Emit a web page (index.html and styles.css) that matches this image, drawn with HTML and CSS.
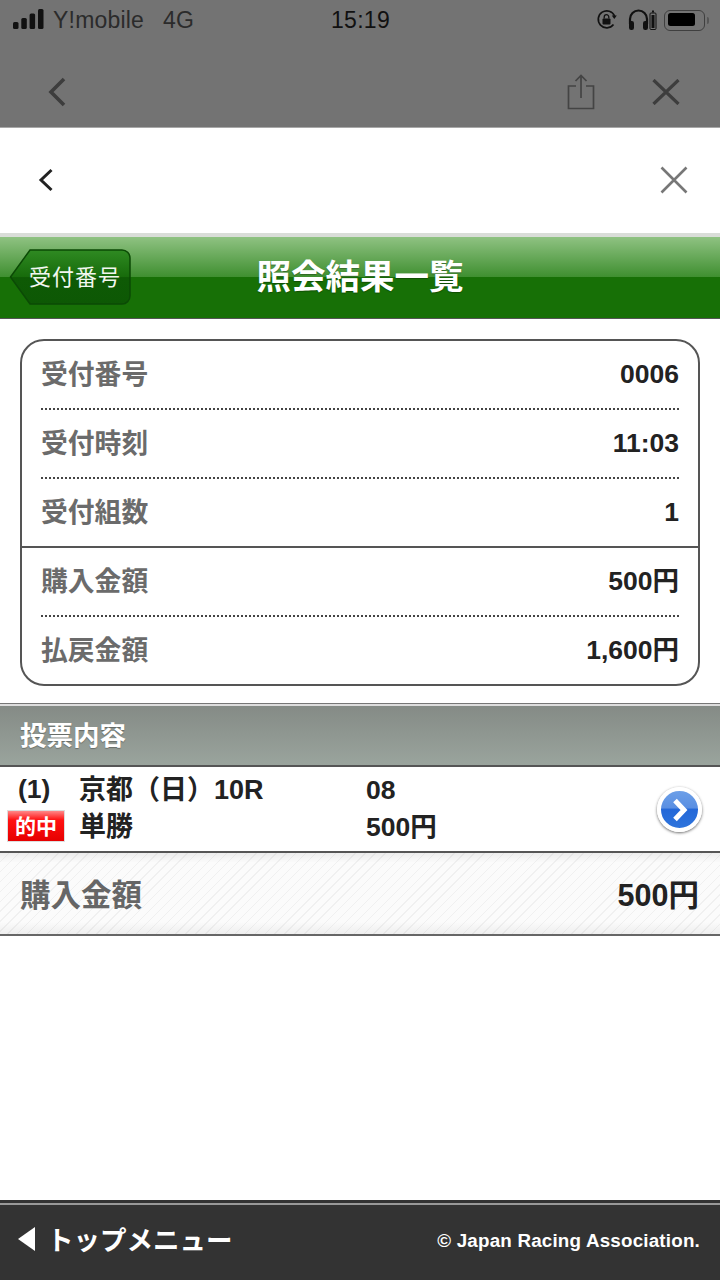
FILE: index.html
```html
<!DOCTYPE html>
<html lang="ja">
<head>
  <meta charset="UTF-8">
  <meta name="viewport" content="width=device-width, initial-scale=1.0">
  <link rel="stylesheet" href="styles.css">
</head>
<body>

<div class="page">

  <!-- dimmed browser chrome -->
  <header class="chrome">
    <div class="status">
      <div class="status-left">
        <svg class="signal" width="31" height="20" viewBox="0 0 31 20">
          <rect x="0" y="13" width="5.500" height="7" rx="1.500"/>
          <rect x="8.300" y="9" width="5.500" height="11" rx="1.500"/>
          <rect x="16.600" y="4.500" width="5.500" height="15.500" rx="1.500"/>
          <rect x="25" y="0" width="5.500" height="20" rx="1.500"/>
        </svg>
        <span class="carrier">Y!mobile</span>
        <span class="network">4G</span>
      </div>
      <div class="clock">15:19</div>
      <div class="status-right">
        <svg width="22" height="22" viewBox="0 0 22 22" fill="none" stroke="#111">
          <path d="M17.500 15.500A8.500 8.500 0 1 1 18.600 7" stroke-width="1.700"/>
          <path d="M15.800 6.500h5l-2.500 3.500z" fill="#111" stroke="none"/>
          <rect x="6.500" y="9.500" width="8" height="6" rx="1" fill="#111" stroke="none"/>
          <path d="M8.200 9.500V8a2.300 2.300 0 0 1 4.600 0v1.500" stroke-width="1.300"/>
        </svg>
        <svg class="phones" width="29" height="22" viewBox="0 0 29 22" fill="none">
          <path d="M2 15V10a8.500 8.500 0 0 1 17 0v5" stroke="#111" stroke-width="2.200"/>
          <rect x="1" y="12" width="5" height="9" rx="2.200" fill="#111"/>
          <rect x="15" y="12" width="5" height="9" rx="2.200" fill="#111"/>
          <rect x="22" y="4" width="6" height="16.500" rx="1" stroke="#111" stroke-width="1"/>
          <rect x="23.500" y="6" width="3" height="13" fill="#111"/>
          <rect x="24" y="1.500" width="2" height="2" fill="#111"/>
        </svg>
        <div class="battery"><div class="battery-fill"></div></div>
        <div class="battery-tip"></div>
      </div>
    </div>
    <div class="chrome-nav">
      <svg width="18" height="30" viewBox="0 0 18 30" fill="none" stroke="#3d3d3d" stroke-width="3.600">
        <path d="M16 2L3 15l13 13"/>
      </svg>
      <div class="chrome-actions">
        <svg width="28" height="36" viewBox="0 0 28 36" fill="none" stroke="#444" stroke-width="1.700">
          <path d="M9 12H1.500v22.500h25V12H19"/>
          <path d="M14 24V2M8.500 7L14 1.500 19.500 7"/>
        </svg>
        <svg width="28" height="26" viewBox="0 0 28 26" fill="none" stroke="#3d3d3d" stroke-width="3.200">
          <path d="M1.500 1l25 24M26.500 1l-25 24"/>
        </svg>
      </div>
    </div>
  </header>

  <!-- white in-app bar -->
  <div class="inner-nav">
    <svg width="16" height="24" viewBox="0 0 16 24" fill="none" stroke="#222" stroke-width="3">
      <path d="M13.500 2L3 12l10.500 10"/>
    </svg>
    <svg width="28" height="28" viewBox="0 0 28 28" fill="none" stroke="#777" stroke-width="2.600">
      <path d="M1.500 1.500l25 25M26.500 1.500l-25 25"/>
    </svg>
  </div>

  <div class="title-bar">
    <div class="back-btn">
      <svg class="back-shape" width="122" height="58" viewBox="0 0 122 58">
        <defs>
          <linearGradient id="backFill" x1="0" y1="0" x2="0" y2="1">
            <stop offset="0" stop-color="#2f8a22"/>
            <stop offset="0.5" stop-color="#176b0b"/>
            <stop offset="0.51" stop-color="#0e5a05"/>
            <stop offset="1" stop-color="#0d5804"/>
          </linearGradient>
        </defs>
        <path d="M1.500 29L21 2h92a8 8 0 0 1 8 8v38a8 8 0 0 1-8 8H21z" fill="url(#backFill)" stroke="#0b4a05" stroke-width="1.500"/>
      </svg>
      <span class="back-label">受付番号</span>
    </div>
    <h1 class="title">照会結果一覧</h1>
  </div>

  <section class="summary">
    <div class="summary-row dotted"><span class="label">受付番号</span><span class="value">0006</span></div>
    <div class="summary-row dotted"><span class="label">受付時刻</span><span class="value">11:03</span></div>
    <div class="summary-row solid"><span class="label">受付組数</span><span class="value">1</span></div>
    <div class="summary-row dotted"><span class="label">購入金額</span><span class="value">500円</span></div>
    <div class="summary-row"><span class="label">払戻金額</span><span class="value">1,600円</span></div>
  </section>

  <h2 class="section-head">投票内容</h2>

  <div class="bet">
    <div class="bet-col-no">
      <span class="bet-no">(1)</span>
      <span class="hit">的中</span>
    </div>
    <div class="bet-col-race">
      <span>京都（日）10R</span>
      <span>単勝</span>
    </div>
    <div class="bet-col-amount">
      <span>08</span>
      <span>500円</span>
    </div>
    <div class="go">
      <svg width="18" height="24" viewBox="0 0 18 24" fill="none" stroke="#fff" stroke-width="5">
        <path d="M4 2.500l9 9.500-9 9.500"/>
      </svg>
    </div>
  </div>

  <div class="total">
    <span class="total-label">購入金額</span>
    <span class="total-value">500円</span>
  </div>

  <div class="spacer"></div>

  <footer class="footer">
    <div class="top-link"><span class="arrow"></span>トップメニュー</div>
    <div class="copy">© Japan Racing Association.</div>
  </footer>

</div>

</body>
</html>
```

FILE: styles.css
```css
* {
  box-sizing: border-box;
}

html, body {
  margin: 0;
  height: 100%;
}

body {
  font-family: 'Liberation Sans', 'Noto Sans CJK JP', sans-serif;
  background: #fff;
  overflow: hidden;
}

.page {
  width: 720px;
  height: 1280px;
  display: flex;
  flex-direction: column;
}

/* chrome */
.chrome {
  height: 128px;
  background: #737373;
  border-bottom: 1px solid #a8a8a8;
  flex: none;
}

.status {
  height: 40px;
  padding: 0 11px 0 13px;
  display: grid;
  grid-template-columns: 1fr auto 1fr;
  align-items: center;
  color: #111;
}

.status-left {
  display: flex;
  align-items: center;
  font-size: 23px;
}

.signal {
  fill: #111;
  margin-right: 9px;
  margin-top: -2px;
}

.carrier {
  color: #2b2b2b;
  letter-spacing: 0.2px;
}

.network {
  margin-left: 19px;
  color: #2b2b2b;
}

.clock {
  font-size: 23px;
  color: #111;
  letter-spacing: 0.3px;
  margin-left: -1px;
}

.status-right {
  display: flex;
  align-items: center;
  justify-content: flex-end;
}

.phones {
  margin-left: 10px;
}

.battery {
  width: 41px;
  height: 21px;
  margin-left: 7px;
  border: 1.5px solid #3f3f3f;
  border-radius: 6px;
  padding: 2.5px;
}

.battery-fill {
  width: 27px;
  height: 13px;
  background: #000;
  border-radius: 2.5px;
}

.battery-tip {
  width: 2px;
  height: 7px;
  margin-left: 2px;
  background: #555;
  border-radius: 0 2px 2px 0;
}

.chrome-nav {
  height: 87px;
  padding: 16px 40px 0 48px;
  display: flex;
  align-items: center;
  justify-content: space-between;
}

.chrome-actions {
  display: flex;
  align-items: center;
  gap: 57px;
}

/* white bar */
.inner-nav {
  height: 105px;
  padding: 0 32px 2px 38px;
  display: flex;
  align-items: center;
  justify-content: space-between;
  flex: none;
}

.title-bar {
  height: 86px;
  flex: none;
  position: relative;
  display: flex;
  align-items: center;
  justify-content: center;
  border-top: 4px solid #d9ddd8;
  border-bottom: 1px solid #555;
  background: linear-gradient(#8fc282 0, #3f8f30 49.500%, #177006 50%, #177006 100%);
}

.back-btn {
  position: absolute;
  left: 9px;
  top: 11px;
  width: 122px;
  height: 58px;
  display: flex;
  align-items: center;
  justify-content: flex-end;
}

.back-shape {
  position: absolute;
  left: 0;
  top: 0;
}

.back-label {
  position: relative;
  font-family: 'Noto Sans CJK JP', sans-serif;
  font-size: 22px;
  color: #f2f7f0;
  margin-right: 10px;
  padding-bottom: 5px;
  letter-spacing: 1px;
}

.title {
  margin: 0;
  padding-bottom: 7px;
  font-family: 'Noto Sans CJK JP', sans-serif;
  font-size: 34.500px;
  font-weight: 700;
  color: #fff;
  text-shadow: 0 1px 1px rgba(0, 0, 0, 0.3);
}

/* summary card */
.summary {
  margin: 20px 20px 17px;
  height: 347px;
  flex: none;
  border: 2px solid #555;
  border-radius: 24px;
  display: flex;
  flex-direction: column;
}

.summary-row {
  flex: 1;
  display: flex;
  align-items: center;
  justify-content: space-between;
  margin: 0 19px;
  padding-bottom: 1px;
}

.summary-row.dotted {
  border-bottom: 2px dotted #444;
}

.summary-row.solid {
  margin: 0;
  padding: 0 19px 1px;
  border-bottom: 2px solid #555;
}

.label {
  font-family: 'Noto Sans CJK JP', sans-serif;
  font-size: 26.800px;
  font-weight: 700;
  color: #6b6b6b;
  padding-bottom: 4px;
}

.value {
  font-size: 26.500px;
  line-height: 30px;
  font-weight: 700;
  color: #222;
}

/* vote list */
.section-head {
  margin: 0;
  height: 64px;
  flex: none;
  padding: 0 0 2px 20px;
  display: flex;
  align-items: center;
  font-family: 'Noto Sans CJK JP', sans-serif;
  font-size: 26.500px;
  font-weight: 700;
  color: #fff;
  border-top: 1px solid #777;
  border-bottom: 2px solid #555;
  box-shadow: inset 0 2px 0 #ddd;
  background: linear-gradient(#848a85, #9aa49d);
  text-shadow: 0 1px 1px rgba(0, 0, 0, 0.3);
}

.bet {
  height: 84px;
  flex: none;
  display: flex;
  align-items: center;
  font-size: 26.500px;
  font-weight: 700;
  color: #222;
  position: relative;
}

.bet span {
  display: block;
}

.bet-col-no {
  width: 79px;
  padding-left: 7px;
  display: flex;
  flex-direction: column;
  gap: 5px;
  margin-top: -4px;
}

.bet-no {
  padding-left: 11px;
  height: 32px;
  line-height: 32px;
}

.hit {
  width: 58px;
  height: 32px;
  line-height: 29px;
  text-align: center;
  font-family: 'Noto Sans CJK JP', sans-serif;
  font-size: 21px;
  color: #fff;
  background: linear-gradient(#f88 0, #f11 30%, #e60000 100%);
  border: 1px solid #ddd;
}

.bet-col-race {
  width: 287px;
  font-size: 27px;
}

.bet-col-race span, .bet-col-amount span {
  height: 37px;
  line-height: 37px;
  white-space: nowrap;
}

.bet-col-race, .bet-col-amount {
  margin-top: -1px;
}

.go {
  position: absolute;
  right: 18px;
  top: 20px;
  width: 45px;
  height: 45px;
  border-radius: 50%;
  border: 4px solid #fff;
  background: linear-gradient(#6c9fe8, #5a8fe2 45%, #2468d8 50%, #2e74dc 100%);
  box-shadow: 0 1px 3px rgba(0, 0, 0, 0.6);
  display: flex;
  align-items: center;
  justify-content: center;
}

.total {
  height: 85px;
  flex: none;
  padding: 0 21px 2px 20px;
  display: flex;
  align-items: center;
  justify-content: space-between;
  border-top: 2px solid #555;
  border-bottom: 2px solid #666;
  background:
    linear-gradient(rgba(0, 0, 0, 0.06), transparent 12%, transparent 85%, rgba(0, 0, 0, 0.05)),
    repeating-linear-gradient(135deg, #fbfbfb 0, #fbfbfb 6px, #f0f0f0 6px, #f0f0f0 7px);
}

.total-label {
  font-family: 'Noto Sans CJK JP', sans-serif;
  font-size: 30.500px;
  font-weight: 700;
  color: #666;
}

.total-value {
  font-size: 30.500px;
  font-weight: 700;
  color: #222;
}

.spacer {
  flex: 1;
}

.footer {
  height: 80px;
  flex: none;
  padding: 0 20px 2px 18px;
  display: flex;
  align-items: center;
  justify-content: space-between;
  background: #333;
  border-top: 3px solid #333;
  box-shadow: inset 0 2px 0 #999;
  color: #fff;
  font-weight: 700;
}

.top-link {
  display: flex;
  align-items: center;
  font-family: 'Noto Sans CJK JP', sans-serif;
  font-size: 26.500px;
  line-height: 38px;
  padding-bottom: 3px;
}

.arrow {
  width: 0;
  height: 0;
  margin-right: 12px;
  border-top: 12px solid transparent;
  border-bottom: 12px solid transparent;
  border-right: 17px solid #fff;
}

.copy {
  font-size: 18.800px;
  letter-spacing: 0.2px;
}
```
